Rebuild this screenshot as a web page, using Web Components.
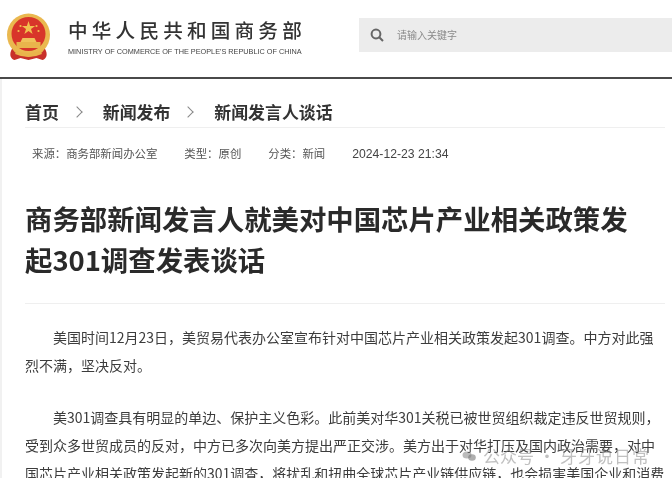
<!DOCTYPE html>
<html lang="zh"><head><meta charset="utf-8">
<style>
html,body{margin:0;padding:0;height:478px;overflow:hidden;background:#fff}
body{font-family:"Noto Sans CJK SC","Liberation Sans",sans-serif;color:#333}
</style></head>
<body>
<mof-page>
  <mof-header slot="header"></mof-header>
  <mof-breadcrumb><span>首页</span><span>新闻发布</span><span>新闻发言人谈话</span></mof-breadcrumb>
  <mof-meta><span>来源：商务部新闻办公室</span><span>类型：原创</span><span>分类：新闻</span><span>2024-12-23 21:34</span></mof-meta>
  <mof-title>商务部新闻发言人就美对中国芯片产业相关政策发起301调查发表谈话</mof-title>
  <mof-para>美国时间12月23日，美贸易代表办公室宣布针对中国芯片产业相关政策发起301调查。中方对此强烈不满，坚决反对。</mof-para>
  <mof-para>美301调查具有明显的单边、保护主义色彩。此前美对华301关税已被世贸组织裁定违反世贸规则，受到众多世贸成员的反对，中方已多次向美方提出严正交涉。美方出于对华打压及国内政治需要，对中国芯片产业相关政策发起新的301调查，将扰乱和扭曲全球芯片产业链供应链，也会损害美国企业和消费者利益。</mof-para>
  <mof-watermark><span>公众号</span><span>·</span><span>牙牙说日常</span></mof-watermark>
</mof-page>
<script>
function def(name,html){
  customElements.define(name,class extends HTMLElement{
    constructor(){super();this.attachShadow({mode:'open'}).innerHTML=html;}
  });
}
def('mof-page',`<style>
:host{display:block;position:relative;width:672px;height:478px;overflow:hidden;filter:blur(.4px)}
.body{border-left:2px solid #f1f1f1;height:399px;overflow:hidden;box-sizing:border-box;padding:0 0 0 23px}
</style>
<slot name="header"></slot><div class="body"><slot></slot></div>`);
def('mof-header',`<style>
:host{display:flex;height:79px;box-sizing:border-box;border-bottom:2px solid #4a4a4a;align-items:flex-start}
.emblem{margin:12px 0 0 6px;width:45px;height:49px;flex:none}
.names{margin:17px 0 0 17px;width:291px;flex:none}
.cn{font:500 19.6px/26px "Noto Sans CJK SC",sans-serif;letter-spacing:4.2px;color:#333;white-space:nowrap}
.en{font:7.3px/12px "Liberation Sans",sans-serif;color:#444;white-space:nowrap;margin-top:3px}
.search{flex:1;margin-top:18px;height:34px;background:#ececec;display:flex;align-items:center;padding-left:11px}
svg.q{width:14px;height:14px;flex:none}
.ph{margin-left:13px;font:10px/14px "Noto Sans CJK SC",sans-serif;color:#8a8a8a}
</style>
<svg class="emblem" viewBox="0 0 44 49">
  <path d="M6 36 C2 42 4 47 8 48 L14 46 L22 48 L30 46 L36 48 C40 47 42 42 38 36Z" fill="#c8302a"/>
  <path d="M9 41 Q22 47 35 41" stroke="#e8b34a" stroke-width="2" fill="none"/>
  <circle cx="22" cy="23" r="21.5" fill="#eab84f"/>
  <circle cx="22" cy="22" r="17" fill="#d8352a"/>
  <polygon points="22,9 23.6,14 28.6,14 24.5,17 26.1,22 22,19 17.9,22 19.5,17 15.4,14 20.4,14" fill="#f2c14e"/>
  <circle cx="14" cy="14" r="1.1" fill="#f2c14e"/><circle cx="30" cy="14" r="1.1" fill="#f2c14e"/>
  <circle cx="12" cy="19" r="1.1" fill="#f2c14e"/><circle cx="32" cy="19" r="1.1" fill="#f2c14e"/>
  <path d="M14 30 L16 26 H28 L30 30Z" fill="#f0c25a"/>
  <rect x="10" y="30" width="24" height="6" fill="#e9b44c"/>
  <path d="M7 37 Q22 45 37 37 L36 40 Q22 48 8 40Z" fill="#e9b44c"/>
</svg>
<div class="names"><div class="cn">中华人民共和国商务部</div><div class="en">MINISTRY OF COMMERCE OF THE PEOPLE'S REPUBLIC OF CHINA</div></div>
<div class="search"><svg class="q" viewBox="0 0 14 14"><circle cx="6" cy="6" r="4.4" fill="none" stroke="#666" stroke-width="2"/><path d="M9.2 9.2 L13 13" stroke="#666" stroke-width="2"/></svg><span class="ph">请输入关键字</span></div>`);
def('mof-breadcrumb',`<style>
:host{display:block;width:640px;height:49px;box-sizing:border-box;padding-top:21px;border-bottom:1px solid #efefef;font:700 16.9px/24px "Noto Sans CJK SC",sans-serif;color:#333;white-space:nowrap}
::slotted(span){position:relative;display:inline-block}
::slotted(span:not(:first-child)){margin-left:44px}
::slotted(span:not(:first-child))::before{content:"";position:absolute;left:-30px;top:8px;width:8px;height:8px;box-sizing:border-box;border-top:1px solid #888;border-right:1px solid #888;transform:rotate(45deg)}
</style><slot></slot>`);
def('mof-meta',`<style>
:host{display:block;padding:16px 0 0 7px;height:50px;box-sizing:border-box;font:11.4px/18px "Noto Sans CJK SC",sans-serif;color:#555;white-space:nowrap}
::slotted(span:not(:first-child)){margin-left:27px}
::slotted(span:last-child){font-family:"Liberation Sans",sans-serif;font-size:12.2px;color:#444}
</style><slot></slot>`);
def('mof-title',`<style>
:host{display:block;width:640px;box-sizing:border-box;padding-right:20px;font:700 27.4px/41px "Noto Sans CJK SC",sans-serif;color:#2a2a2a;padding-top:20px;padding-bottom:23px;border-bottom:1px solid #efefef;margin-bottom:19px}
</style><slot></slot>`);
def('mof-para',`<style>
:host{display:block;width:640px;text-indent:28px;font:14px/28.3px "Noto Sans CJK SC",sans-serif;color:#3c3c3c;margin-bottom:23px}
</style><slot></slot>`);
def('mof-watermark',`<style>
:host{display:flex;align-items:center;position:absolute;left:462px;top:444px;height:24px;font:17px/24px "Noto Sans CJK SC",sans-serif;color:rgba(130,130,130,.5);white-space:nowrap}
svg{width:14px;height:10px;margin-right:7px;flex:none}
::slotted(span:nth-of-type(2)){width:26px;text-align:center}
::slotted(span:nth-of-type(3)){letter-spacing:1px}
</style><svg viewBox="0 0 14 10"><ellipse cx="5" cy="4" rx="4.5" ry="3.6" fill="rgba(120,120,120,.5)"/><ellipse cx="10" cy="6.5" rx="3.8" ry="3.2" fill="rgba(120,120,120,.6)"/></svg><slot></slot>`);
</script>
</body></html>
